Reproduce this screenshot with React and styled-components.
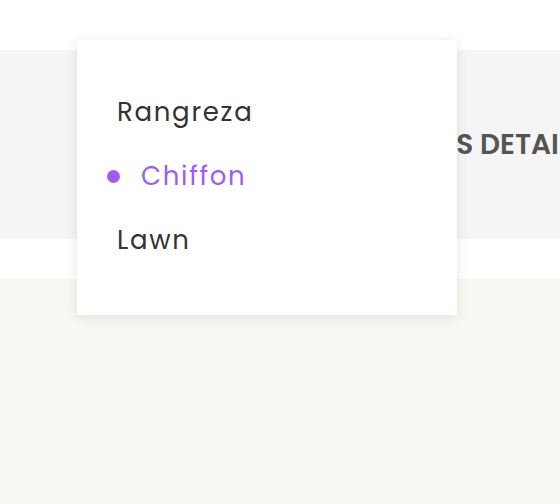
import React from "react";
import styled, { createGlobalStyle } from "styled-components";

const GlobalStyle = createGlobalStyle`
  html, body {
    margin: 0;
    padding: 0;
    background: #fff;
    font-family: "Poppins", "Inter", "Noto Sans", sans-serif;
  }
  * {
    box-sizing: border-box;
  }
`;

const Page = styled.div`
  position: relative;
  width: 560px;
  height: 504px;
  overflow: hidden;
  display: flex;
  flex-direction: column;
`;

const Header = styled.header`
  height: 50px;
  background: #fff;
`;

const Banner = styled.section`
  height: 189px;
  background: #f5f5f5;
  display: flex;
  align-items: center;
  padding-left: 322px;
  white-space: nowrap;
`;

const BannerTitle = styled.h1`
  margin: 0;
  font-size: 28px;
  font-weight: 600;
  color: #555;
`;

const Gap = styled.div`
  height: 40px;
  background: #fff;
`;

const Content = styled.main`
  flex: 1;
  background: #f8f7f2;
`;

const Menu = styled.ul`
  position: absolute;
  left: 77px;
  top: 40px;
  width: 380px;
  height: 275px;
  margin: 0;
  padding: 40px 0 0 40px;
  list-style: none;
  background: #fff;
  box-shadow: 0 2px 12px rgba(0, 0, 0, 0.1);
`;

const MenuItem = styled.li`
  position: relative;
  height: 64px;
  line-height: 64px;
  font-size: 26px;
  font-weight: 400;
  letter-spacing: 1.7px;
  color: ${(p) => (p.$active ? "#a05cf2" : "#333")};
  padding-left: ${(p) => (p.$active ? "24px" : "0")};

  &::before {
    content: "";
    display: ${(p) => (p.$active ? "block" : "none")};
    position: absolute;
    left: -10px;
    top: 50%;
    width: 13px;
    height: 13px;
    margin-top: -6px;
    border-radius: 50%;
    background: #a05cf2;
  }
`;

const items = [
  { label: "Rangreza" },
  { label: "Chiffon", active: true },
  { label: "Lawn" },
];

const App = () => (
  <Page>
    <GlobalStyle />
    <Header />
    <Banner>
      <BannerTitle>PRODUCTS DETAILS</BannerTitle>
    </Banner>
    <Gap />
    <Content />
    <Menu>
      {items.map((item) => (
        <MenuItem key={item.label} $active={item.active}>
          {item.label}
        </MenuItem>
      ))}
    </Menu>
  </Page>
);

export default App;
